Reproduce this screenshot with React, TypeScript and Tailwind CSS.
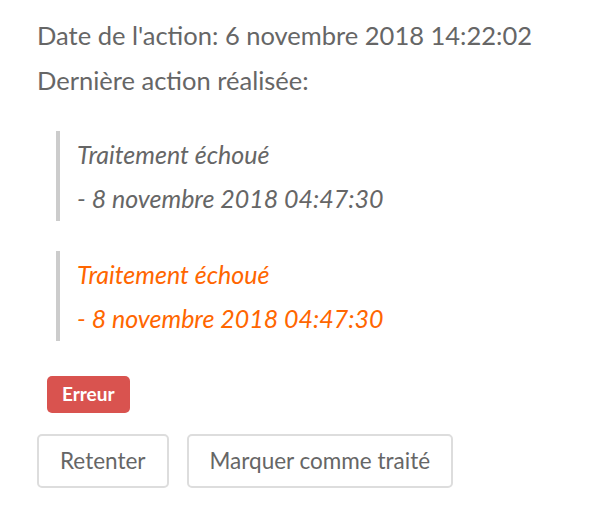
export default function App() {
  return (
    <div className="min-h-screen bg-white px-[37px] pt-[18px] font-['Lato','Open_Sans',sans-serif] text-[#666]">
      <p className="text-[25.5px] leading-[34px]">Date de l'action: 6 novembre 2018 14:22:02</p>
      <p className="mt-[11px] text-[25.5px] leading-[34px]">Dernière action réalisée:</p>

      <div className="mt-[34px] flex flex-col gap-[30px] pl-[19px]">
        <blockquote className="border-l-4 border-[#ccc] py-[1px] pl-[17px] italic text-[25px] leading-[44px] text-[#666]">
          <div>Traitement échoué</div>
          <div>- 8 novembre 2018 04:47:30</div>
        </blockquote>
        <blockquote className="border-l-4 border-[#ccc] py-[1px] pl-[17px] italic text-[25px] leading-[44px] text-[#f60]">
          <div>Traitement échoué</div>
          <div>- 8 novembre 2018 04:47:30</div>
        </blockquote>
      </div>

      <div className="mt-[35px] flex pl-[10px]">
        <span className="flex h-[37px] items-center rounded-[5px] bg-[#d9534f] px-[15px] text-[19px] font-bold text-white">
          Erreur
        </span>
      </div>

      <div className="mt-[21px] flex gap-[18px]">
        <button className="h-[54px] rounded-[5px] border-2 border-[#ddd] bg-white px-[21px] text-[22.5px] text-[#666]">
          Retenter
        </button>
        <button className="h-[54px] rounded-[5px] border-2 border-[#ddd] bg-white px-[21px] text-[22.5px] text-[#666]">
          Marquer comme traité
        </button>
      </div>
    </div>
  );
}
